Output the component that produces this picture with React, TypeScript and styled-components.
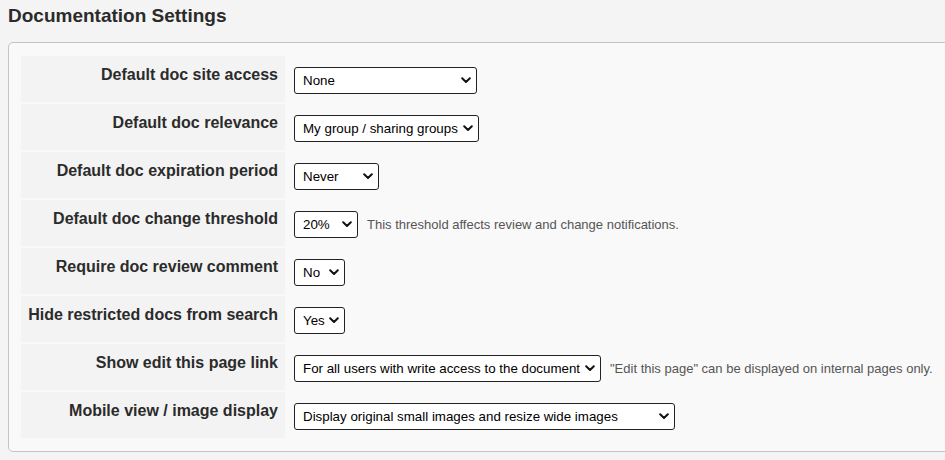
import React from "react";
import styled, { createGlobalStyle } from "styled-components";

interface Setting {
  label: string;
  value: string;
  width: number;
  help?: string;
}

const settings: Setting[] = [
  { label: "Default doc site access", value: "None", width: 183 },
  { label: "Default doc relevance", value: "My group / sharing groups", width: 185 },
  { label: "Default doc expiration period", value: "Never", width: 85 },
  {
    label: "Default doc change threshold",
    value: "20%",
    width: 64,
    help: "This threshold affects review and change notifications.",
  },
  { label: "Require doc review comment", value: "No", width: 51 },
  { label: "Hide restricted docs from search", value: "Yes", width: 51 },
  {
    label: "Show edit this page link",
    value: "For all users with write access to the document",
    width: 307,
    help: "\"Edit this page\" can be displayed on internal pages only.",
  },
  {
    label: "Mobile view / image display",
    value: "Display original small images and resize wide images",
    width: 381,
  },
];

const Chevron = () => (
  <svg width="10" height="7" viewBox="0 0 10 7">
    <path
      d="M1.2 1.3 L5 5 L8.8 1.3"
      fill="none"
      stroke="#111"
      strokeWidth="2"
      strokeLinecap="round"
      strokeLinejoin="round"
    />
  </svg>
);

const App: React.FC = () => {
  return (
    <>
      <GlobalStyle />
      <Title>Documentation Settings</Title>
      <Panel>
        <SettingsGrid>
          {settings.map((s) => (
            <React.Fragment key={s.label}>
              <LabelCell>{s.label}</LabelCell>
              <ValueCell>
                <SelectWrap $width={s.width}>
                  <Select defaultValue={s.value}>
                    <option>{s.value}</option>
                  </Select>
                  <Arrow>
                    <Chevron />
                  </Arrow>
                </SelectWrap>
                {s.help && <Help>{s.help}</Help>}
              </ValueCell>
            </React.Fragment>
          ))}
        </SettingsGrid>
      </Panel>
    </>
  );
};

const GlobalStyle = createGlobalStyle`
  html, body {
    margin: 0;
    padding: 0;
    background: #f4f4f4;
    overflow: hidden;
  }
  body {
    padding: 0 0 0 8px;
    font-family: "Liberation Sans", Arial, sans-serif;
    color: #333;
  }
`;

const Title = styled.h2`
  margin: 0;
  padding: 5px 0 0 0;
  height: 37px;
  font-size: 19px;
  font-weight: bold;
  color: #2b2b2b;
`;

const Panel = styled.div`
  width: 960px;
  height: 410px;
  box-sizing: border-box;
  background: #f9f9f9;
  border: 1px solid #c4c4c4;
  border-radius: 5px;
  padding: 11px 10px 10px 10px;
`;

const SettingsGrid = styled.div`
  display: grid;
  grid-template-columns: 264px 1fr;
  grid-auto-rows: 46px;
  gap: 2px;
  padding: 2px;
`;

const LabelCell = styled.div`
  background: #f3f3f3;
  padding: 10px 7px 0 0;
  text-align: right;
  font-size: 16px;
  font-weight: bold;
  color: #2b2b2b;
  white-space: nowrap;
`;

const ValueCell = styled.div`
  display: flex;
  align-items: center;
  align-self: start;
  gap: 9px;
  padding: 11px 0 0 7px;
`;

const SelectWrap = styled.div<{ $width: number }>`
  position: relative;
  width: ${(p) => p.$width}px;
  height: 27px;
  flex: none;
`;

const Select = styled.select`
  appearance: none;
  -webkit-appearance: none;
  width: 100%;
  height: 100%;
  box-sizing: border-box;
  margin: 0;
  padding: 0 12px 0 8px;
  border: 1px solid #222;
  border-radius: 3px;
  background: #fff;
  font-family: "Liberation Sans", Arial, sans-serif;
  font-size: 13.33px;
  color: #000;
  outline: none;
`;

const Arrow = styled.span`
  position: absolute;
  right: 6px;
  top: 10px;
  display: flex;
  pointer-events: none;
`;

const Help = styled.span`
  font-size: 13px;
  color: #555;
  white-space: nowrap;
`;

export default App;
